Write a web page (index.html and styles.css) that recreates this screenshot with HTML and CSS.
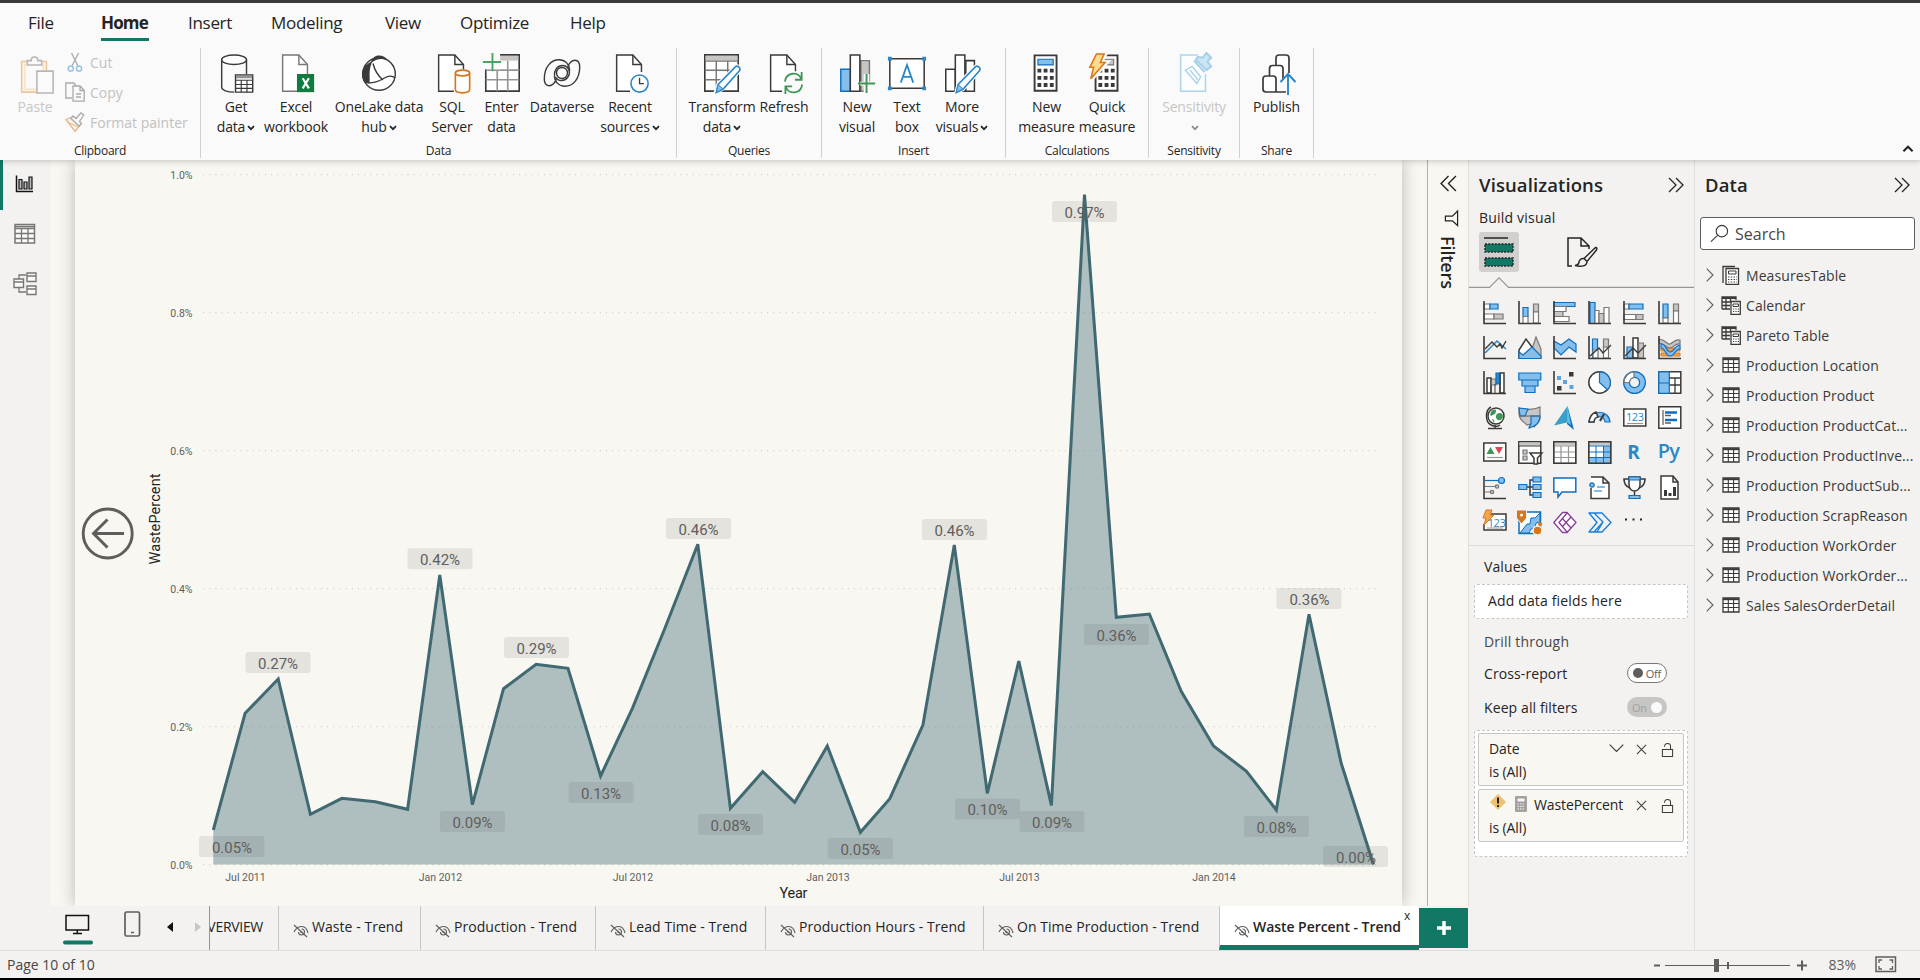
FILE: index.html
```html
<!DOCTYPE html>
<html lang="en">
<head>
<meta charset="utf-8">
<title>Waste Percent - Trend</title>
<link rel="stylesheet" href="styles.css">
</head>
<body>
<svg class="defs" width="0" height="0">
  <defs>
    <symbol id="chev" viewBox="0 0 8 6"><path d="M1 1.2 4 4.2 7 1.2" fill="none" stroke="#252423" stroke-width="1.8"/></symbol>
    <symbol id="hidden-eye" viewBox="0 0 16 14"><path d="M1 1 14 13M1 8C3 4 6 2.500 9 2.500 12 2.500 14 5 15 9M5.500 8a3 3 0 1 0 3-3" fill="none" stroke="#605e5c" stroke-width="1.1"/><circle cx="8.300" cy="8" r="1" fill="#605e5c"/></symbol>
    <symbol id="dbl-right" viewBox="0 0 16 16"><path d="M1 1 8 8 1 15M8 1 15 8 8 15" fill="none" stroke="#252423" stroke-width="1.3"/></symbol>
    <symbol id="row-chev" viewBox="0 0 8 14"><path d="M.7.7 7 7 .7 13.300" fill="none" stroke="#605e5c" stroke-width="1.1"/></symbol>
    <symbol id="t-table" viewBox="0 0 20 20"><path d="M2 3h16v14H2z" fill="#fff" stroke="#3b3a39" stroke-width="1.3"/><path d="M2 4.200h16" stroke="#3b3a39" stroke-width="2"/><path d="M2 8.500h16M2 12.500h16M7.300 4v13M12.600 4v13" stroke="#3b3a39" stroke-width="1.100"/></symbol>
    <symbol id="t-calc" viewBox="0 0 20 20"><path d="M2 18V1.500h12" fill="none" stroke="#3b3a39" stroke-width="1.300"/><path d="M5 3.500h12.500v16H5z" fill="#fff" stroke="#3b3a39" stroke-width="1.300"/><path d="M7.500 6h7.500v3H7.500z" fill="none" stroke="#3b3a39"/><path d="M7 12h9M7 14.500h9M7 17h9" stroke="#3b3a39" stroke-dasharray="1.400 1.400"/></symbol>
    <symbol id="t-tablecalc" viewBox="0 0 20 20"><path d="M1 14V2h14v3M1 3.300h14M1 7h9M1 10.500h8M1 14h8M5 3v11M9.500 3v4" fill="none" stroke="#3b3a39" stroke-width="1.300"/><path d="M10 6.500h9.300v13H10z" fill="#fff" stroke="#3b3a39" stroke-width="1.300"/><path d="M12 9h5.500v2.500H12z" fill="none" stroke="#3b3a39"/><path d="M12 14h6M12 16.500h6" stroke="#3b3a39" stroke-dasharray="1.200 1.200"/></symbol>
    <symbol id="lock" viewBox="0 0 14 16"><path d="M1.500 7.500h11v7.500h-11z" fill="none" stroke="#3b3a39" stroke-width="1.100"/><path d="M3.800 4.500C3.800 2 5 1 7 1s3.300 1.200 3.300 3.200V7.500" fill="none" stroke="#3b3a39" stroke-width="1.100"/></symbol>
    <symbol id="cross" viewBox="0 0 12 12"><path d="M1 1 11 11M11 1 1 11" stroke="#3b3a39" stroke-width="1.100"/></symbol>
  </defs>
</svg>

<header class="ribbon">
  <nav class="menu">
    <span class="m-file">File</span><span class="m-home active">Home</span><span class="m-insert">Insert</span><span class="m-model">Modeling</span><span class="m-view">View</span><span class="m-opt">Optimize</span><span class="m-help">Help</span>
  </nav>
  <div class="groups">
    <section class="group g-clip">
      <div class="tools">
        <div class="btn dim w-paste">
          <svg class="ico" viewBox="0 0 40 44"><g fill="none" stroke-width="1.600"><path d="M6 9h26v32H6z" fill="#fdf3e2" stroke="#ecc79d"/><path d="M9.500 12h19v26h-19z" fill="#fafafa" stroke="#f6e3c8"/><path d="M12 12.500V8h4c0-5 7-5 7 0h4v4.500z" fill="#fafafa" stroke="#b8b6b4"/><path d="M22 19h17v23H22z" fill="#fafafa" stroke="#b8b6b4"/></g></svg>
          <b>Paste</b>
        </div>
        <div class="small-tools">
          <div class="stool"><svg viewBox="0 0 20 20"><path d="M6.500 1 13 14M13.500 1 7 14" stroke="#aaa" stroke-width="1.300"/><circle cx="5.800" cy="16.500" r="2.600" fill="none" stroke="#95c3e0" stroke-width="1.500"/><circle cx="14" cy="16.500" r="2.600" fill="none" stroke="#95c3e0" stroke-width="1.500"/></svg>Cut</div>
          <div class="stool"><svg viewBox="0 0 20 20"><path d="M7 16H.8V1h8l2 2M8 4h7l4.200 4.200V19.200H8zM15 4v4.500h4M11 12h5M11 15h5" fill="none" stroke="#aaa" stroke-width="1.300"/></svg>Copy</div>
          <div class="stool"><svg viewBox="0 0 20 20"><path d="M1 7.500 8.500 4.500 16 12 10 19.500z" fill="#fdf3e2" stroke="#e5b58f" stroke-width="1.300"/><path d="M2 10 13 15" stroke="#e5b58f"/><path d="M8 4 11 6.500 16 .8 18.800 3 14.500 9.500 16.500 11.500 14 14 6 6.500z" fill="#fafafa" stroke="#aaa" stroke-width="1.300"/></svg>Format painter</div>
        </div>
      </div>
      <footer>Clipboard</footer>
    </section>
    <section class="group g-data">
      <div class="tools">
        <div class="btn w60">
          <svg class="ico" viewBox="0 0 40 44"><g fill="none" stroke="#3b3a39" stroke-width="1.500"><path d="M5 7v29c0 3 6 5 13 5"/><path d="M31 7v15"/><ellipse cx="18" cy="7" rx="13" ry="5" fill="#fff"/><path d="M19.500 23h18v18h-18z" fill="#fff"/><path d="M20 25h17" stroke="#979593" stroke-width="3"/><path d="M19.500 28.500h18M19.500 33h18M19.500 37h18M25.500 28v13M31.500 28v13" stroke-width="1.200"/></g></svg>
          <b>Get<br>data<svg class="chev"><use href="#chev"/></svg></b>
        </div>
        <div class="btn w60">
          <svg class="ico" viewBox="0 0 40 44"><path d="M22 40H6V2h17l9 10v12" fill="#fff" stroke="#797775" stroke-width="1.500"/><path d="M23 2v10h9" fill="none" stroke="#797775" stroke-width="1.500"/><path d="M21 22h18v19H21z" fill="#107c41"/><path d="M27 26.500 33.500 37M33.500 26.500 27 37" stroke="#fff" stroke-width="2.300"/></svg>
          <b>Excel<br>workbook</b>
        </div>
        <div class="btn w106">
          <svg class="ico" viewBox="0 0 40 42"><circle cx="20" cy="21" r="16.300" fill="#fff" stroke="#3b3a39" stroke-width="1.400"/><path d="M11.500 10.500C13 5 16 2.500 20 2.500c4 0 6.500 1.500 8.500 4.500-6-2-12-1-17 3.500z" fill="#3b3a39"/><path d="M12.500 8.500C8 11 3.500 14 3 20.500 2.700 27 6 31 9.500 30.500 12.500 29.500 8.500 20 12.500 10.500z" fill="#3b3a39"/><path d="M14 10.500c1.500 6 4.500 12 10 16.500M9.500 30c7 0 10-1.500 15-4.500 4.500-2.700 8.500-3.500 11.500-.5" fill="none" stroke="#3b3a39" stroke-width="1.400"/></svg>
          <b>OneLake data<br>hub<svg class="chev"><use href="#chev"/></svg></b>
        </div>
        <div class="btn w40">
          <svg class="ico" viewBox="0 0 40 44"><path d="M22 40H6V2h17l9 10v5" fill="#fff" stroke="#3b3a39" stroke-width="1.500"/><path d="M23 2v10h9" fill="none" stroke="#3b3a39" stroke-width="1.500"/><path d="M23.500 21v17c0 5 15 5 15 0V21" fill="#fff" stroke="#d8761a" stroke-width="1.700"/><ellipse cx="31" cy="21" rx="7.500" ry="3" fill="#fff" stroke="#d8761a" stroke-width="1.700"/></svg>
          <b>SQL<br>Server</b>
        </div>
        <div class="btn w59">
          <svg class="ico" viewBox="0 0 40 44"><path d="M3 2h35v38H3z" fill="#fff" stroke="#3b3a39" stroke-width="1.700"/><path d="M17 3h20v5H17z" fill="#c8c6c4"/><path d="M3 18h35M3 28h35M15 18v22M26 8v32" stroke="#979593" stroke-width="1.700"/><path d="M1 0h17v17H1z" fill="#fafafa"/><path d="M10 0v19M0 9.500h19" stroke="#4aa564" stroke-width="2"/></svg>
          <b>Enter<br>data</b>
        </div>
        <div class="btn w62">
          <svg class="ico" viewBox="0 0 40 42"><g fill="none" stroke="#3b3a39" stroke-width="1.400"><path d="M14.500 25C13.500 30 10 32.800 7 32.800 3.500 32.800 2.300 29.500 2.300 26 2.300 14 9 6.700 17 6.700c6 0 10.500 4.300 10.500 10.500"/><path d="M25.500 15C26.500 10 30 7.200 33 7.200c3.500 0 4.700 3.300 4.700 6.800 0 12-6.700 19.300-14.700 19.300-6 0-10.500-4.300-10.500-10.500"/><path d="M12.500 22.800C12 17 15.500 12.500 20.500 12.500c4 0 7 3 7 7.500M27.500 17.200c.5 5.800-3 10.300-8 10.300-3 0-5-1.500-6-3.500"/><circle cx="20" cy="20" r="5.500"/></g></svg>
          <b>Dataverse</b>
        </div>
        <div class="btn w74">
          <svg class="ico" viewBox="0 0 40 44"><path d="M20 40H6V2h17l9 10v8" fill="#fff" stroke="#3b3a39" stroke-width="1.500"/><path d="M23 2v10h9" fill="none" stroke="#3b3a39" stroke-width="1.500"/><circle cx="30" cy="32" r="9" fill="#fff" stroke="#2b88c8" stroke-width="1.700"/><path d="M30 26v6h4.500" fill="none" stroke="#3b3a39" stroke-width="1.400"/></svg>
          <b>Recent<br>sources<svg class="chev"><use href="#chev"/></svg></b>
        </div>
      </div>
      <footer>Data</footer>
    </section>
    <section class="group g-query">
      <div class="tools">
        <div class="btn w68">
          <svg class="ico" viewBox="0 0 40 44"><path d="M2 2h35v38H2z" fill="#fff" stroke="#3b3a39" stroke-width="1.700"/><path d="M3 3h33v5H3z" fill="#c8c6c4"/><path d="M2 8.500h35M2 18h35M2 28h25M14 9v30M26 9v20" stroke="#797775" stroke-width="1.500"/><path d="M13 42 16 33 34 14.500c2-2 6 1 4.500 4L20 38z" fill="#fff" stroke="#fff" stroke-width="4"/><path d="M14 41.500 16 33 34 14.500c2-2 6 1 4.500 4L21 38z" fill="#fff" stroke="#2b88c8" stroke-width="1.700"/><path d="M14 41.500 16 33l5 4.500z" fill="#83beec" stroke="#2b88c8"/></svg>
          <b>Transform<br>data<svg class="chev"><use href="#chev"/></svg></b>
        </div>
        <div class="btn w56">
          <svg class="ico" viewBox="0 0 40 44"><path d="M18 40H6V2h17l9 10v7" fill="#fff" stroke="#3b3a39" stroke-width="1.500"/><path d="M23 2v10h9" fill="none" stroke="#3b3a39" stroke-width="1.500"/><path d="M21 30c1-10 14-11 17-3M38.500 20v8h-7M39 33c-1 10-14 11-17 3M21.500 43v-8h7" fill="none" stroke="#3f9657" stroke-width="1.900"/></svg>
          <b>Refresh</b>
        </div>
      </div>
      <footer>Queries</footer>
    </section>
    <section class="group g-insert">
      <div class="tools">
        <div class="btn w50">
          <svg class="ico" viewBox="0 0 40 44"><path d="M24 8h9v32h-9z" fill="#c8c6c4" stroke="#797775" stroke-width="1.500"/><path d="M3 17h10v23H3z" fill="#83beec" stroke="#106ebe" stroke-width="1.500"/><path d="M13 2h10v38H13z" fill="#fff" stroke="#3b3a39" stroke-width="1.600"/><path d="M27 22h6v8h6v12H27v-8h-4v-4h4z" fill="#fafafa"/><path d="M30 22v20M21 32h18" stroke="#3f9657" stroke-width="2"/></svg>
          <b>New<br>visual</b>
        </div>
        <div class="btn w50">
          <svg class="ico" viewBox="0 0 40 44"><path d="M2 6h36v31H2z" fill="#fff" stroke="#3b3a39" stroke-width="1.600"/><path d="M0 4h4v4H0zM36 4h4v4h-4zM0 35h4v4H0zM36 35h4v4h-4z" fill="#2b88c8"/><path d="M13.500 31 20 12.500 26.500 31M15.500 25h9" fill="none" stroke="#2b88c8" stroke-width="1.900"/></svg>
          <b>Text<br>box</b>
        </div>
        <div class="btn w60">
          <svg class="ico" viewBox="0 0 40 44"><g fill="#fff" stroke="#3b3a39" stroke-width="1.600"><path d="M24 8h9v32h-9z"/><path d="M3 17h10v23H3z"/><path d="M13 2h10v38H13z"/></g><path d="M14 41.500 16 33 34 14.500c2-2 6 1 4.500 4L21 38z" fill="#fff" stroke="#fff" stroke-width="4"/><path d="M14 41.500 16 33 34 14.500c2-2 6 1 4.500 4L21 38z" fill="#fff" stroke="#2b88c8" stroke-width="1.700"/><path d="M14 41.500 16 33l5 4.500z" fill="#83beec" stroke="#2b88c8"/></svg>
          <b>More<br>visuals<svg class="chev"><use href="#chev"/></svg></b>
        </div>
      </div>
      <footer>Insert</footer>
    </section>
    <section class="group g-calc">
      <div class="tools">
        <div class="btn w61">
          <svg class="ico" viewBox="0 0 40 44"><path d="M7 2.500h23v37H7z" fill="#fff" stroke="#3b3a39" stroke-width="2"/><path d="M10.500 6.500h16v6h-16z" fill="#83beec" stroke="#106ebe" stroke-width="1.200"/><path d="M10 18.500h17M10 26h17M10 33.500h17" stroke="#3b3a39" stroke-width="4" stroke-dasharray="4 2.500"/></svg>
          <b>New<br>measure</b>
        </div>
        <div class="btn w60">
          <svg class="ico" viewBox="0 0 40 44"><path d="M8 2.500h23v37H8z" fill="#fff" stroke="#3b3a39" stroke-width="2"/><path d="M11 6.500h16v6H11z" fill="#c8c6c4" stroke="#797775" stroke-width="1.200"/><path d="M11 18.500h17M11 26h17M11 33.500h17" stroke="#3b3a39" stroke-width="4" stroke-dasharray="4 2.500"/><path d="M9 1h9l-5 9h6L3 28l3-13H1z" fill="#fedb8b" stroke="#fafafa" stroke-width="5"/><path d="M9 1h8l-4 9h5L3 27l3-12H2z" fill="#fedb8b" stroke="#d8761a" stroke-width="1.600"/></svg>
          <b>Quick<br>measure</b>
        </div>
      </div>
      <footer>Calculations</footer>
    </section>
    <section class="group g-sens">
      <div class="tools">
        <div class="btn dim w91">
          <svg class="ico" viewBox="0 0 40 44"><path d="M24 2H6v38h26V22" fill="#fbfdfe" stroke="#acd5ec" stroke-width="1.600"/><path d="M18 14 27 25 23 32 11 18z" fill="#fff" stroke="#acd5ec" stroke-width="1.600"/><path d="M16 18 24 28" stroke="#acd5ec" stroke-width="1.500"/><path d="M20 8 31 20M24 4l5 1 4-5 5 5-4 4 4 5-5 4L22 7z" fill="#cce5f3" stroke="#a4cfe6" stroke-width="2"/></svg>
          <b>Sensitivity<br><svg class="chev"><use href="#chev"/></svg></b>
        </div>
      </div>
      <footer>Sensitivity</footer>
    </section>
    <section class="group g-share">
      <div class="tools">
        <div class="btn w74">
          <svg class="ico" viewBox="0 0 40 42"><g fill="#fff" stroke="#3b3a39" stroke-width="1.700"><path d="M19 12V5q0-3 3-3h7q3 0 3 3v15M12.500 23v-7.500q0-3 3-3H23q3 0 3 3V27"/><path d="M19 39V26q0-3-3-3H9q-3 0-3 3v10q0 3 3 3h20"/></g><path d="M31 42V21M23.500 29 31 21l7.500 8" fill="none" stroke="#2b88c8" stroke-width="1.900"/></svg>
          <b>Publish</b>
        </div>
      </div>
      <footer>Share</footer>
    </section>
    <svg class="collapse" viewBox="0 0 10 7"><path d="M1 5.500 5 1.500 9 5.500" fill="none" stroke="#252423" stroke-width="1.800"/></svg>
  </div>
</header>

<main class="workspace">
  <nav class="views">
    <div class="view on"><svg width="24" height="24" viewBox="0 0 24 24"><path d="M4.500 3.500v16H21" fill="none" stroke="#111" stroke-width="1.500"/><path d="M7 7.500h3V17H7zM12 10h3v7h-3zM17 5h3v12h-3z" fill="#bbb" stroke="#111" stroke-width="1.200"/></svg></div>
    <div class="view"><svg width="24" height="24" viewBox="0 0 24 24"><path d="M3 2.500h19.500v18.500H3z" fill="#fafafa" stroke="#797775" stroke-width="1.500"/><path d="M3 4.500h19.500M3 6.500h19.500M3 11.500h19.500M3 16.500h19.500M9.500 6v15M16 6v15" stroke="#797775" stroke-width="1.300"/></svg></div>
    <div class="view"><svg width="26" height="26" viewBox="0 0 26 26"><path d="M8 8V4h7M8 17v4h7" fill="none" stroke="#797775" stroke-width="1.300"/><path d="M3 8h9.500v8.500H3zM16 2h9v8.500h-9zM16 15h9v8.500h-9zM3 11h9.500M16 5h9M16 18h9" fill="#fafafa" stroke="#797775" stroke-width="1.400"/></svg></div>
  </nav>

  <div class="center">
    <div class="canvas-row">
      <div class="canvas">
        <svg class="page" viewBox="75 160 1327 746" width="1327" height="746">
          <g class="gridlines"><path d="M203 174.700H1381M203 312.700H1381M203 450.700H1381M203 588.700H1381M203 726.700H1381M203 864.700H1381"/></g>
          <path class="area" d="M213.300 864.500V830L245.100 713.300 278.200 679 310.400 814.300 341.800 798.300 375.300 801.700 407.600 809.300 439.800 575 472.400 804.700 503.500 688.700 536.100 664.300 568 668.300 600.600 776 632.400 708.300 665 628 697.800 544.300 730.400 808.300 762.700 771.700 794.700 802.300 827.300 746 860.400 832.300 889.800 798.700 922.900 725 954.300 545 987.300 793.300 1018.800 661 1051.400 805.300 1084.500 194.700 1116.300 617.300 1149.400 614 1181.200 691.300 1213.500 746 1246.500 771.300 1276.300 810 1309 614.300 1341.200 763.300 1373.500 864.500z"/>
          <path class="line" d="M213.300 830 245.100 713.300 278.200 679 310.400 814.300 341.800 798.300 375.300 801.700 407.600 809.300 439.800 575 472.400 804.700 503.500 688.700 536.100 664.300 568 668.300 600.600 776 632.400 708.300 665 628 697.800 544.300 730.400 808.300 762.700 771.700 794.700 802.300 827.300 746 860.400 832.300 889.800 798.700 922.900 725 954.300 545 987.300 793.300 1018.800 661 1051.400 805.300 1084.500 194.700 1116.300 617.300 1149.400 614 1181.200 691.300 1213.500 746 1246.500 771.300 1276.300 810 1309 614.300 1341.200 763.300 1373.500 864.500"/>
          <g class="ylab"><text x="192.500" y="178.500">1.0%</text><text x="192.500" y="316.500">0.8%</text><text x="192.500" y="454.500">0.6%</text><text x="192.500" y="592.500">0.4%</text><text x="192.500" y="730.500">0.2%</text><text x="192.500" y="868.500">0.0%</text></g>
          <g class="xlab"><text x="245.500" y="880.500">Jul 2011</text><text x="440.500" y="880.500">Jan 2012</text><text x="633" y="880.500">Jul 2012</text><text x="828" y="880.500">Jan 2013</text><text x="1019.500" y="880.500">Jul 2013</text><text x="1214" y="880.500">Jan 2014</text></g>
          <text class="title" x="793.500" y="897.500" textLength="28">Year</text>
          <text class="title" transform="translate(160 519) rotate(-90)" textLength="91">WastePercent</text>
          <g class="pill">
            <rect x="199" y="836" width="65.500" height="21" rx="3"/><rect x="245.500" y="652" width="65" height="21" rx="3"/><rect x="407.500" y="548.300" width="65" height="21" rx="3"/><rect x="440" y="811" width="65" height="21" rx="3"/><rect x="504" y="637" width="65" height="21" rx="3"/><rect x="568.500" y="782" width="65" height="21" rx="3"/><rect x="666" y="518" width="65" height="21" rx="3"/><rect x="698" y="814" width="65" height="21" rx="3"/><rect x="827.500" y="838" width="65.500" height="21" rx="3"/><rect x="922" y="519" width="65" height="21" rx="3"/><rect x="955" y="798.500" width="65" height="21" rx="3"/><rect x="1019.500" y="811" width="65" height="21" rx="3"/><rect x="1052" y="201" width="65" height="21" rx="3"/><rect x="1084" y="624" width="65" height="21" rx="3"/><rect x="1244" y="816" width="65" height="21" rx="3"/><rect x="1276.500" y="588" width="65" height="21" rx="3"/><rect x="1323" y="846" width="65" height="21" rx="3"/>
          </g>
          <g class="vals">
            <text x="232" y="852.500">0.05%</text><text x="278" y="669">0.27%</text><text x="440" y="565">0.42%</text><text x="472.500" y="828">0.09%</text><text x="536.500" y="654">0.29%</text><text x="601" y="799">0.13%</text><text x="698.500" y="535">0.46%</text><text x="730.500" y="831">0.08%</text><text x="860.500" y="855">0.05%</text><text x="954.500" y="536">0.46%</text><text x="987.500" y="815">0.10%</text><text x="1052" y="828">0.09%</text><text x="1084.500" y="217.500">0.97%</text><text x="1116.500" y="641">0.36%</text><text x="1276.500" y="833">0.08%</text><text x="1309.500" y="605">0.36%</text><text x="1356" y="863">0.00%</text>
          </g>
          <g class="back"><circle cx="107.700" cy="533.500" r="24.500"/><path d="M124 533.500H94M107.500 519.500 93.500 533.500 107.500 547.500"/></g>
        </svg>
      </div>
      <aside class="filters">
        <svg class="f-open" viewBox="0 0 16 16"><path d="M8 1 1 8 8 15M15 1 8 8 15 15" fill="none" stroke="#252423" stroke-width="1.300"/></svg>
        <svg class="f-icon" viewBox="0 0 16 18"><path d="M14.500 1v15.500L9 11.500H1.500V6.500H9z" fill="none" stroke="#252423" stroke-width="1.300"/></svg>
        <span>Filters</span>
      </aside>
    </div>
    <div class="tabs">
      <div class="devices">
        <svg class="desk" viewBox="0 0 30 34"><path d="M3 4.500h22.500V19H3z" fill="none" stroke="#111" stroke-width="1.500"/><path d="M14.300 19v3.500M10 22.500h9" stroke="#111" stroke-width="1.500"/><rect x="0" y="29.500" width="30" height="4" rx="2" fill="#117865"/></svg>
        <svg class="phone" viewBox="0 0 17 27"><rect x="1" y="1" width="14.500" height="24" rx="1.500" fill="none" stroke="#605e5c" stroke-width="1.700"/><path d="M7 21.500h3" stroke="#605e5c" stroke-width="1.500"/></svg>
        <svg class="arr" viewBox="0 0 6 10"><path d="M6 0v10L0 5z" fill="#111"/></svg>
        <svg class="arr2" viewBox="0 0 6 10"><path d="M0 0v10l6-5z" fill="#c8c6c4"/></svg>
      </div>
      <div class="tab t0"><span>OVERVIEW</span></div>
      <div class="tab t1"><svg><use href="#hidden-eye"/></svg><span>Waste - Trend</span></div>
      <div class="tab t2"><svg><use href="#hidden-eye"/></svg><span>Production - Trend</span></div>
      <div class="tab t3"><svg><use href="#hidden-eye"/></svg><span>Lead Time - Trend</span></div>
      <div class="tab t4"><svg><use href="#hidden-eye"/></svg><span>Production Hours - Trend</span></div>
      <div class="tab t5"><svg><use href="#hidden-eye"/></svg><span>On Time Production - Trend</span></div>
      <div class="tab t6"><svg><use href="#hidden-eye"/></svg><span>Waste Percent - Trend</span><i>x</i></div>
      <div class="add"><svg width="14" height="14" viewBox="0 0 14 14"><path d="M7 0v14M0 7h14" stroke="#fff" stroke-width="3.500"/></svg></div>
    </div>
  </div>

  <aside class="viz">
    <div class="head"><h2>Visualizations</h2><svg><use href="#dbl-right"/></svg></div>
    <div class="sub">Build visual</div>
    <div class="modes">
      <div class="mode on"><svg width="40" height="40" viewBox="0 0 40 40"><path d="M5 6h24" stroke="#252423" stroke-width="1.500"/><path d="M6 12h28v8H6zM6 26h28v8H6z" fill="#117865" stroke="#252423" stroke-width="1.500" stroke-dasharray="2 1.300"/></svg></div>
      <div class="mode"><svg width="32" height="32" viewBox="0 0 32 32"><path d="M6 30H2V2h13l8 8v3M15 2v8h8" fill="none" stroke="#252423" stroke-width="1.500"/><path d="M18 22.500 29.500 11.500c2 0 1.500 1.500 1 2.500L21 25.500zM18 22.500c-3-.5-5 2-5 4-.5 2-2 3-4 3 6 1.500 12 1 12-4z" fill="#f3f2f1" stroke="#252423" stroke-width="1.400"/></svg></div>
    </div>
    <svg class="notch" viewBox="0 0 225 11" width="225" height="11"><path d="M0 10.300H20.500L30 .8 39.500 10.300H225" fill="none" stroke="#979593" stroke-width="1.200"/></svg>
    <div class="gallery">
      <svg viewBox="0 0 24 24"><g class="b"><path d="M1 3h6v5H1z" class="w"/><path d="M7 3h8v5H7z" class="bl"/><path d="M1 13h10v5H1z" class="w"/><path d="M11 13h9v5h-9z" class="gr"/></g><path class="ax" d="M1 0v22.500h22"/></svg>
      <svg viewBox="0 0 24 24"><g class="b"><path d="M5 6.500h5v9H5z" class="bl"/><path d="M5 15.500h5v7H5z" class="w"/><path d="M15.500 3h5v8h-5z" class="gr"/><path d="M15.500 11h5v11h-5z" class="w"/></g><path class="ax" d="M1 0v22.500h22"/></svg>
      <svg viewBox="0 0 24 24"><g class="b"><path d="M1 1.500h21v4H1z" class="bl"/><path d="M1 5.500h12v5H1z" class="w"/><path d="M1 10.500h9v5H1z" class="gr"/><path d="M1 15.500h15v5H1z" class="w"/></g><path class="ax" d="M1 0v22.500h22"/></svg>
      <svg viewBox="0 0 24 24"><g class="b"><path d="M2 1.500h5v21H2z" class="bl"/><path d="M7 9.500h4v13H7z" class="w"/><path d="M11 12.500h5v10h-5z" class="gr"/><path d="M16 6.500h5v16h-5z" class="w"/></g><path class="ax" d="M1 0v22.500h22"/></svg>
      <svg viewBox="0 0 24 24"><g class="b"><path d="M1 3h5v5H1z" class="w"/><path d="M6 3h14v5H6z" class="bl"/><path d="M1 13.500h12v5H1z" class="w"/><path d="M13 13.500h7v5h-7z" class="gr"/></g><path class="ax" d="M1 0v22.500h22"/></svg>
      <svg viewBox="0 0 24 24"><g class="b"><path d="M5 3h5v14H5z" class="bl"/><path d="M5 17h5v5H5z" class="w"/><path d="M15.500 3h5v7h-5z" class="gr"/><path d="M15.500 10h5v12h-5z" class="w"/></g><path class="ax" d="M1 0v22.500h22"/></svg>

      <svg viewBox="0 0 24 24"><path d="M2 17 14 5 23 13" fill="none" stroke="#2b88c8" stroke-width="1.500"/><path d="M2 13 9 6 14 11 17 8 19 12 23 5" fill="none" stroke="#3b3a39" stroke-width="1.400"/><path class="ax" d="M1 0v22.500h22"/></svg>
      <svg viewBox="0 0 24 24"><path d="M11 22 18 1l5 12v9z" class="gr"/><path d="M1 22V14L8 3l9 12v7z" class="w dk"/><path d="M1 22.500V16l4 3 9-8 9 9v2.500z" class="bl"/></svg>
      <svg viewBox="0 0 24 24"><path d="M1 5 8 9 16 3l7 5v8l-7-5-8 8-7-7z" class="bl"/><path class="ax" d="M1 0v22.500h22"/></svg>
      <svg viewBox="0 0 24 24"><path d="M4.500 3h5v19h-5z" class="bl"/><path d="M5 14h5v8H5zM15.500 11h5v11h-5z" class="w"/><path d="M15.500 3h5v8h-5z" class="gr"/><path d="M2 20 11 12 15 17 23 9" fill="none" stroke="#3b3a39" stroke-width="1.400"/><path class="ax" d="M1 0v22.500h22"/></svg>
      <svg viewBox="0 0 24 24"><path d="M4 11h6v11H4z" class="bl"/><path d="M10 2h5v20h-5z" class="w dk"/><path d="M15.500 7h5v15h-5z" class="gr"/><path d="M2 20 10 12 15 17 23 9" fill="none" stroke="#3b3a39" stroke-width="1.400"/><path class="ax" d="M1 0v22.500h22"/></svg>
      <svg viewBox="0 0 24 24"><path d="M3 12h19v3H3zM3 17h19v3H3z" fill="#f5a54a" stroke="#d8761a"/><path d="M1 3c8 1 8 6 11 5s5-5 10-4v4c-6-1-6 4-10 4S6 7 1 7z" class="gr"/><path d="M3 8c6 0 5 8 9 8s5-7 10-7v4c-5 0-5 7-10 7S8 12 3 12z" class="bl"/><path class="ax" d="M1 0v22.500h22"/></svg>

      <svg viewBox="0 0 24 24"><path d="M4 7h4v15H4zM17 2h4v20h-4z" class="w dk"/><path d="M8 8h5v6H8z" class="gr"/><path d="M13 2h4v11h-4z" class="bl solid"/><path d="M8 7v15M12 13v9M17 2v20" stroke="#3b3a39"/><path class="ax" d="M1 0v22.500h22"/></svg>
      <svg viewBox="0 0 24 24"><path d="M.8 2h22v7h-22zM4 9h16v6H4zM7 15h10v6.500H7z" class="bl"/></svg>
      <svg viewBox="0 0 24 24"><path d="M16 1h4.500v4.500H16zM4 15h4.500v4.500H4z" fill="#3b3a39"/><path d="M4 5h4v4H4zM10 9h4v4h-4zM16.500 14h4v4h-4z" fill="#5ba5de"/><path class="ax" d="M1 0v22.500h22"/></svg>
      <svg viewBox="0 0 24 24"><circle cx="11.500" cy="11.500" r="10.700" class="w dk"/><path d="M11.500 11.500V.8a10.700 10.700 0 0 1 8 18z" class="bl"/></svg>
      <svg viewBox="0 0 24 24"><circle cx="11.500" cy="11.500" r="8" fill="none" stroke="#106ebe" stroke-width="7"/><circle cx="11.500" cy="11.500" r="8" fill="none" stroke="#83beec" stroke-width="4.500"/><path d="M1 11.500A10.500 10.500 0 0 1 11 1v5.500a5 5 0 0 0-4.500 5z" class="w" /></svg>
      <svg viewBox="0 0 24 24"><path d="M.8.8h22v21.500h-22z" class="w dk"/><path d="M.8.8h10.500v21.500H.8zM.8 12h10.500" class="bl"/><path d="M11.500 7h11M17 7v15M11.500 14h5.500M17 14h6" stroke="#3b3a39" fill="none" stroke-width="1.300"/></svg>

      <svg viewBox="0 0 24 24"><circle cx="13" cy="10" r="8" class="w dk"/><path d="M8 6c2-3 5-3 5-1s-1 3-3 4-2 1-3 0zM14 8c2-2 6-1 6 2s-3 5-5 4-3-4-1-6zM9 13c2 0 3 2 2 4z" fill="#3f9657"/><path d="M8 1C2 4 2 16 8 19c3 1.500 7 1.500 9 0M12 19v3M5 22.500h14" fill="none" stroke="#3b3a39" stroke-width="1.500"/></svg>
      <svg viewBox="0 0 24 24"><path d="M1 2c5 3 17 1 21-1v10c0 6-4 8-6 10l-3-3-4 1C6 16 1 14 1 8z" class="gr"/><path d="M1 2l9 1-3 7H2zM2 10l-1-8M13 10h9c0 6-3 8-6 10l-5 2c0-2 3-4 2-6z" class="bl"/><path d="M2 10h20" stroke="#605e5c"/></svg>
      <svg viewBox="0 0 24 24"><path d="M14.500 0 21 24 14 18z" fill="#106ebe"/><path d="M14.500 0 1 19.500 14 16.500z" fill="#3a9fc9"/><path d="M14.500 0 14 16.500 18 19z" fill="#5cc0e4"/></svg>
      <svg viewBox="0 0 24 24"><path d="M1 16C2 3 21 3 22 16h-5C16 9 7 9 6 16z" class="bl"/><path d="M1 16C2 9 5 7 8 6l2 5c-2 0-4 2-4 5z" class="w dk"/><path d="M16 8 12 15" stroke="#3b3a39" stroke-width="2.200"/></svg>
      <svg viewBox="0 0 24 24"><path d="M.8 3h22v17h-22z" class="w dk"/><text x="11.800" y="14.500" class="num">123</text><path d="M4 17.500h16" stroke="#979593" stroke-width="1.200"/></svg>
      <svg viewBox="0 0 24 24"><path d="M.8.8h22v21.500h-22z" class="w dk"/><path d="M5 4v15" stroke="#3b3a39"/><path d="M7 6.500h12M7 14h12" stroke="#106ebe" stroke-width="2.300"/><path d="M7 9.500h6M7 17h6" stroke="#605e5c" stroke-width="1.300"/></svg>

      <svg viewBox="0 0 24 24"><path d="M.8 2h22v18h-22z" class="w dk"/><path d="M3.500 13 7.500 6l4 7z" fill="#3f9657"/><path d="M12 6h8l-4 7z" fill="#e04450"/><path d="M4 16.500h16" stroke="#979593" stroke-width="1.200"/></svg>
      <svg viewBox="0 0 24 24"><path d="M.8.8h22v21.500h-22z" class="w dk"/><path d="M1.500 1.500h20.500v3H1.500z" fill="#c8c6c4"/><path d="M.8 5h22" stroke="#3b3a39"/><path d="M5 9h4v4H5zM5 15h4v4H5z" class="gr"/><path d="M12 12h12l-4.500 5v6H16v-6z" class="w dk"/></svg>
      <svg viewBox="0 0 24 24"><path d="M.8.8h22v21.500h-22z" class="w"/><path d="M1.500 1.500h20.500v3H1.500z" fill="#c8c6c4"/><path d="M.8 5h22M.8 11h22M.8 16.500h22M8 5v17M15.500 5v17" stroke="#979593" stroke-width="1.200"/><path d="M.8.8h22v21.500h-22z" fill="none" stroke="#3b3a39" stroke-width="1.500"/></svg>
      <svg viewBox="0 0 24 24"><path d="M.8.8h22v21.500h-22z" class="w"/><path d="M1.500 1.500h20.500v3H1.500z" fill="#c8c6c4"/><path d="M15 5h7.500v17H1v-6h14z" fill="#83beec"/><path d="M.8 5h22M.8 11h22M.8 16.500h22M8 5v17M15.500 5v17" stroke="#106ebe" stroke-width="1"/><path d="M.8.8h22v21.500h-22z" fill="none" stroke="#3b3a39" stroke-width="1.500"/></svg>
      <svg viewBox="0 0 24 24"><text x="10.500" y="18" class="r">R</text></svg>
      <svg viewBox="0 0 24 24"><text x="10.500" y="17" class="r py">Py</text></svg>

      <svg viewBox="0 0 24 24"><path class="ax" d="M1 0v22.500h22"/><path d="M2 4.500h14" stroke="#106ebe" stroke-width="1.200"/><circle cx="18.500" cy="4.500" r="3" class="bl"/><path d="M2 10.500h10M2 16h5" stroke="#797775"/><circle cx="14" cy="10.500" r="1.700" class="gr"/><circle cx="9" cy="16" r="1.700" class="gr"/></svg>
      <svg viewBox="0 0 24 24"><path d="M9 11h6M12 11V4h3M12 11v8h3" fill="none" stroke="#3b3a39" stroke-width="1.500"/><path d="M.8 8.500h8v5h-8zM15 1h8v5h-8zM15 8.500h8v5h-8zM15 16.500h8v5h-8z" class="bl"/></svg>
      <svg viewBox="0 0 24 24"><path d="M.8 2h22v14H9l-4 5v-5H.8z" class="w blue"/></svg>
      <svg viewBox="0 0 24 24"><path d="M3 1h12l6 6v15.500H3V12M15 1v6h6" class="w dk"/><circle cx="4" cy="9" r="2.200" class="bl"/><path d="M9 11h8M6 15h8" stroke="#5ba5de" stroke-width="1.300"/></svg>
      <svg viewBox="0 0 24 24"><path d="M6 3H1c0 6 3 8 6 9M17 3h5c0 6-3 8-6 9" fill="none" stroke="#3b3a39" stroke-width="1.600"/><path d="M6 1h11v8c0 4-3 6-5.500 6S6 13 6 9zM11.500 15v5" class="w dk"/><path d="M6 1h11v3H6zM6 19.500h11v3H6z" class="bl"/></svg>
      <svg viewBox="0 0 24 24"><path d="M3 0h12l5 6v17H3zM15 0v6h5" class="w dk"/><path d="M6 14h3v6H6zM10.500 17h3v3h-3zM15 11h3v9h-3z" fill="#3b3a39"/></svg>

      <svg viewBox="0 0 24 24"><path d="M8 3h15v16H1v-6" class="w dk"/><text x="13.500" y="15.500" class="num">123</text><path d="M4 17h16" stroke="#979593"/><path d="M3-1h6L7 4h4L1 14l2-7H0z" fill="#f5a54a" stroke="#d8761a"/></svg>
      <svg viewBox="0 0 24 24"><path d="M1 1h21.500v21.500H1z" class="w blue"/><path d="M2 22 9 13h3l1-6h4l5-5v9l-4 1-1 5-4 1-2 4z" fill="#83beec" stroke="#106ebe"/><path d="M-1.500-1h10V7L3.500 13-1.500 7z" fill="#d8761a" stroke="#f3f2f1"/><circle cx="3.500" cy="4" r="1.500" fill="#fff"/><circle cx="19.500" cy="19.500" r="4.500" fill="#d8761a" stroke="#f3f2f1" stroke-width="1.500"/><circle cx="22" cy="13" r="2" fill="#d8761a"/></svg>
      <svg viewBox="0 0 24 24"><g fill="#fff" stroke="#893f9b" stroke-width="1.300" stroke-linejoin="round"><path d="M9.500 1.500H14L23 11.500 14 21.500H9.500L.8 11.500z"/><path d="M14.500 1.500 6 11.500 9.500 15.500 18 6M18 17 9.500 7.500 6 11.500 14.500 21.500" fill="none"/></g></svg>
      <svg viewBox="0 0 24 24"><path d="M1 2h13l9 9.500-9 9.500H1l8-9.500zM6 2l9 9-9 10M15 11 9 21" fill="none" stroke="#1b7fd8" stroke-width="1.400" stroke-linejoin="round"/></svg>
      <svg viewBox="0 0 24 24"><path d="M2 8.500h2M9.500 8.500h2M17 8.500h2" stroke="#252423" stroke-width="2"/></svg>
    </div>
    <div class="fields">
      <label>Values</label>
      <div class="drop">Add data fields here</div>
      <label class="drill">Drill through</label>
      <div class="opt"><span>Cross-report</span><div class="tog off"><i></i>Off</div></div>
      <div class="opt"><span>Keep all filters</span><div class="tog">On<i></i></div></div>
      <div class="well">
        <div class="card"><div class="top"><span>Date</span><svg class="dn" viewBox="0 0 15 9"><path d="M.7.700 7.500 7.500 14.300.700" fill="none" stroke="#3b3a39" stroke-width="1.100"/></svg><svg class="x"><use href="#cross"/></svg><svg class="lk"><use href="#lock"/></svg></div><p>is (All)</p></div>
        <div class="card"><div class="top"><svg class="warn" viewBox="0 0 16 16"><path d="M8 0 16 8 8 16 0 8z" fill="#eec06f"/><path d="M8 3.500v6M8 11v2" stroke="#252423" stroke-width="2"/></svg><svg class="cal" viewBox="0 0 12 16"><path d="M.6.600h10.800v14.800H.6z" fill="#a19f9d" stroke="#a19f9d"/><path d="M2.500 2.500h7v3h-7z" fill="#f8f7f2"/><path d="M2.500 8h7M2.500 10.500h7M2.500 13h7" stroke="#f8f7f2" stroke-dasharray="1.500 1"/></svg><span class="wp">WastePercent</span><svg class="x"><use href="#cross"/></svg><svg class="lk"><use href="#lock"/></svg></div><p>is (All)</p></div>
      </div>
    </div>
  </aside>

  <aside class="data">
    <div class="head"><h2>Data</h2><svg><use href="#dbl-right"/></svg></div>
    <div class="search"><svg viewBox="0 0 20 20"><circle cx="12.500" cy="7.500" r="6" fill="none" stroke="#3b3a39" stroke-width="1.200"/><path d="M8 12 1 18.500" stroke="#3b3a39" stroke-width="1.200"/></svg>Search</div>
    <ul>
      <li><svg class="c"><use href="#row-chev"/></svg><svg class="t"><use href="#t-calc"/></svg>MeasuresTable</li>
      <li><svg class="c"><use href="#row-chev"/></svg><svg class="t"><use href="#t-tablecalc"/></svg>Calendar</li>
      <li><svg class="c"><use href="#row-chev"/></svg><svg class="t"><use href="#t-tablecalc"/></svg>Pareto Table</li>
      <li><svg class="c"><use href="#row-chev"/></svg><svg class="t"><use href="#t-table"/></svg>Production Location</li>
      <li><svg class="c"><use href="#row-chev"/></svg><svg class="t"><use href="#t-table"/></svg>Production Product</li>
      <li><svg class="c"><use href="#row-chev"/></svg><svg class="t"><use href="#t-table"/></svg>Production ProductCat...</li>
      <li><svg class="c"><use href="#row-chev"/></svg><svg class="t"><use href="#t-table"/></svg>Production ProductInve...</li>
      <li><svg class="c"><use href="#row-chev"/></svg><svg class="t"><use href="#t-table"/></svg>Production ProductSub...</li>
      <li><svg class="c"><use href="#row-chev"/></svg><svg class="t"><use href="#t-table"/></svg>Production ScrapReason</li>
      <li><svg class="c"><use href="#row-chev"/></svg><svg class="t"><use href="#t-table"/></svg>Production WorkOrder</li>
      <li><svg class="c"><use href="#row-chev"/></svg><svg class="t"><use href="#t-table"/></svg>Production WorkOrder...</li>
      <li><svg class="c"><use href="#row-chev"/></svg><svg class="t"><use href="#t-table"/></svg>Sales SalesOrderDetail</li>
    </ul>
  </aside>
</main>

<footer class="status">
  <span>Page 10 of 10</span>
  <svg class="zoom" viewBox="0 0 152 14" width="152" height="14"><path d="M0 7.500h6M143 7.500h10M148 2.500v10" stroke="#605e5c" stroke-width="2"/><path d="M11 7.500h125" stroke="#605e5c"/><path d="M60 1h5v13h-5zM73 4h2v7h-2z" fill="#605e5c"/></svg>
  <span class="pct">83%</span>
  <svg class="fit" viewBox="0 0 22 17" width="22" height="17"><path d="M1 1h19.500v14.500H1z" fill="none" stroke="#605e5c" stroke-width="1.500"/><path d="M7 4H4v3M4 10v3h3M14.500 4h3v3M17.500 10v3h-3" fill="none" stroke="#605e5c" stroke-width="1.300"/></svg>
</footer>
</body>
</html>
```
FILE: styles.css
```css
* { box-sizing: border-box; }
html { height: 980px; overflow: hidden; }
body {
  margin: 0;
  width: 1920px;
  height: 980px;
  overflow: hidden;
  display: flex;
  flex-direction: column;
  background: #f3f2f1;
  color: #252423;
  font-family: "Open Sans", "Noto Sans", sans-serif;
  font-size: 14px;
  letter-spacing: 0;
  border-bottom: 2px solid #000;
}
.defs { position: absolute; }
svg { flex: none; overflow: visible; }
h2, p, ul { margin: 0; padding: 0; }

/* ribbon */
.ribbon {
  flex: none;
  height: 160px;
  background: #fafafa;
  border-top: 3px solid #3b3a39;
  box-shadow: 0 1px 6px rgba(0, 0, 0, .22);
  position: relative;
  z-index: 2;
}
.menu {
  height: 38px;
  display: flex;
  padding-left: 28px;
  font-size: 17px;
  line-height: 39px;
  letter-spacing: -.3px;
}
.menu span { white-space: nowrap; }
.m-file { width: 73px; }
.m-home { width: 48px; margin-right: 39px; }
.m-insert { width: 83px; }
.m-model { width: 114px; }
.m-view { width: 75px; }
.m-opt { width: 110px; }
.menu .active { font-weight: 700; letter-spacing: -.85px; border-bottom: 3px solid #117865; }
.groups { height: 119px; padding-top: 7px; display: flex; }
.group {
  height: 110px;
  border-right: 1px solid #d2d0ce;
  display: flex;
  flex-direction: column;
}
.tools { display: flex; height: 96px; padding-top: 5px; }
.group footer { text-align: center; font-size: 12px; line-height: 15px; letter-spacing: -.25px; }
.g-clip { width: 201px; }
.g-data { width: 476px; }
.g-data .tools { padding-left: 5px; }
.g-query { width: 145px; }
.g-query .tools { padding-left: 11px; }
.g-insert { width: 184px; }
.g-insert .tools { padding-left: 10px; }
.g-calc { width: 143px; }
.g-calc .tools { padding-left: 10px; }
.g-sens { width: 91px; }
.g-share { width: 74px; }
.btn { display: flex; flex-direction: column; align-items: center; }
.btn b { font-weight: 400; font-size: 14px; line-height: 20px; letter-spacing: -.15px; white-space: nowrap; text-align: center; margin-top: 2px; }
.ico { width: 40px; height: 42px; }
.dim { color: #c8c6c4; }
.dim .chev { opacity: .5; }
.chev { width: 8px; height: 6px; margin-left: 2px; vertical-align: 1px; }
.w-paste { width: 70px; }
.w40 { width: 40px; } .w50 { width: 50px; } .w56 { width: 56px; } .w59 { width: 59px; } .w60 { width: 60px; }
.w61 { width: 61px; } .w62 { width: 62px; } .w68 { width: 68px; } .w74 { width: 74px; } .w91 { width: 91px; } .w106 { width: 106px; }
.small-tools { margin-left: -5px; margin-top: -6px; }
.stool { height: 30px; display: flex; align-items: center; gap: 5px; color: #c3c1bf; white-space: nowrap; }
.stool svg { width: 20px; height: 20px; }
.collapse { width: 12px; height: 8px; margin: 97px 6px 0 auto; }

/* workspace */
.workspace { height: 790px; display: flex; flex: none; }
.views { width: 50px; }
.view { height: 50px; display: flex; align-items: center; justify-content: center; border-left: 3px solid transparent; padding: 0 5px 2px 0; }
.view.on { border-color: #117865; }
.center { width: 1419px; }
.canvas-row { height: 746px; display: flex; background: #f8f7f2; overflow: hidden; }
.canvas { width: 1377px; padding-left: 25px; overflow: hidden; }
.page { display: block; background: #f8f7f2; box-shadow: 0 0 16px rgba(0, 0, 0, .25); }
.filters { width: 42px; border-left: 1px solid #b3b0ad; border-right: 1px solid #e1dfdd; display: flex; flex-direction: column; align-items: center; }
.f-open { width: 17px; height: 17px; margin-top: 15px; }
.f-icon { width: 15px; height: 17px; margin: 18px 0 0 7px; }
.filters span { writing-mode: vertical-rl; font-size: 18px; font-weight: 600; line-height: 24px; margin-top: 9px; letter-spacing: -.1px; }

/* chart */
.gridlines path { fill: none; stroke: #c8c6c0; stroke-width: 1; stroke-dasharray: 1 5.2; }
.area { fill: #406972; fill-opacity: .4; }
.line { fill: none; stroke: #406972; stroke-width: 3; }
.page text { font-family: Roboto, sans-serif; letter-spacing: 0; text-anchor: middle; }
.page .ylab text { font-size: 10.5px; text-anchor: end; fill: #605e5c; }
.xlab text { font-size: 10.5px; fill: #605e5c; }
.page .title { font-size: 14.5px; fill: #252423; }
.pill rect { fill: #605e5c; fill-opacity: .13; }
.vals text { font-size: 15px; fill: #605e5c; }
.back * { fill: none; stroke: #605e5c; stroke-width: 2.9; }

/* page tabs */
.tabs { height: 44px; display: flex; }
.devices { width: 159px; display: flex; align-items: flex-start; }
.desk { width: 30px; height: 34px; margin: 5px 0 0 13px; }
.phone { width: 17px; height: 27px; margin: 5px 0 0 31px; }
.arr { width: 6px; height: 10px; margin: 16px 0 0 26px; }
.arr2 { width: 6px; height: 10px; margin: 16px 0 0 22px; }
.tab { border-left: 1px solid #c8c6c4; display: flex; align-items: center; padding: 0 0 3px 15px; white-space: nowrap; overflow: hidden; letter-spacing: .05px; }
.tab svg { width: 16px; height: 14px; margin: 9px 3px 0 -1px; }
.tab span { flex: none; }
.t0 { width: 69px; padding-left: 0; border-color: #979593; justify-content: flex-end; padding-right: 15px; letter-spacing: -.3px; }
.t1 { width: 142px; } .t2 { width: 175px; } .t3 { width: 170px; } .t4 { width: 218px; } .t5 { width: 236px; }
.t6 { width: 200px; padding: 2px 0 0; padding-left: 15px; background: #fff; border-bottom: 5px solid #117865; font-weight: 600; }
.t6 span { letter-spacing: -.05px; }
.t6 i { font-style: normal; font-size: 12px; font-weight: 400; margin: -22px 0 0 3px; }
.add { width: 49px; height: 40px; margin-top: 2px; background: #117865; display: flex; align-items: center; justify-content: center; }

/* panes */
.viz { width: 226px; border-right: 1px solid #e1dfdd; }
.data { width: 225px; }
.head { height: 50px; display: flex; align-items: center; justify-content: space-between; padding: 0 10px 1px; }
.head h2 { font-size: 18.5px; font-weight: 600; letter-spacing: .1px; }
.head svg { width: 16px; height: 16px; }
.sub { padding-left: 10px; line-height: 16px; height: 22px; letter-spacing: .2px; font-weight: 500; }
.modes { height: 46px; display: flex; padding-left: 10px; gap: 43px; }
.mode { width: 40px; height: 40px; border-radius: 3px; display: flex; align-items: center; justify-content: center; }
.mode.on { background: #d2d0ce; }
.notch { display: block; margin-top: -1px; }
.gallery {
  height: 258px;
  display: grid;
  grid-template-columns: repeat(6, 35px);
  grid-auto-rows: 35px;
  padding: 13px 0 0 14px;
  border-bottom: 1px solid #dddbd9;
}
.gallery svg { width: 24px; height: 24px; }
.ax { fill: none; stroke: #3b3a39; stroke-width: 1.6; }
.w { fill: #fff; stroke: #797775; stroke-width: 1.2; }
.bl { fill: #83beec; stroke: #106ebe; stroke-width: 1.2; }
.gr { fill: #c8c6c4; stroke: #797775; stroke-width: 1.2; }
.dk { stroke: #3b3a39; stroke-width: 1.5; }
.blue { stroke: #106ebe; stroke-width: 1.5; }
.solid { fill: #2b88c8; }
.num { font-size: 11px; fill: #2b88c8; text-anchor: middle; letter-spacing: -.4px; }
.r { font-size: 19px; font-weight: 700; fill: #2b88c8; text-anchor: middle; }
.py { font-size: 20px; font-weight: 600; letter-spacing: -.8px; }
.fields { padding: 11px 6px 0 5px; letter-spacing: .1px; }
.fields label { display: block; padding-left: 10px; line-height: 20px; height: 27px; }
.drop { height: 35px; border: 1px dashed #c8c6c4; background: #fff; line-height: 32px; padding-left: 13px; border-radius: 3px; letter-spacing: .15px; }
.fields .drill { margin-top: 13px; height: 27px; font-weight: 500; color: #484644; letter-spacing: .2px; }
.opt { height: 34px; display: flex; align-items: center; justify-content: space-between; padding: 0 21px 6px 10px; }
.tog { width: 40px; height: 20px; border-radius: 10px; background: #c8c6c4; color: #a19f9d; font-size: 11px; display: flex; align-items: center; justify-content: space-between; padding: 0 5px; letter-spacing: -.2px; }
.tog i { width: 11px; height: 11px; border-radius: 50%; background: #fafafa; }
.tog.off { background: #fff; border: 1px solid #797775; color: #605e5c; }
.tog.off i { background: #605e5c; width: 10px; height: 10px; }
.well { height: 127px; margin-top: 3px; background: #fff; border: 1px dashed #c8c6c4; border-radius: 3px; padding: 2px 3px; }
.card { height: 53px; border: 1px solid #c8c6c4; border-radius: 2px; background: #f8f7f2; padding: 2px 9px 0 10px; margin-bottom: 3px; letter-spacing: -.1px; }
.top { display: flex; align-items: center; height: 25px; }
.top span { flex: 1; }
.card p { line-height: 21px; }
.dn { width: 15px; height: 9px; margin-right: 12px; }
.x { width: 11px; height: 11px; margin-right: 14px; margin-top: 2px; }
.lk { width: 13px; height: 16px; margin-top: 3px; }
.warn { width: 16px; height: 16px; margin: -6px 9px 0 1px; }
.cal { width: 12px; height: 16px; margin: -2px 7px 0 0; }
.search { margin: 7px 5px 10px; height: 33px; border: 1px solid #605e5c; border-radius: 3px; background: #fff; display: flex; align-items: center; font-size: 16px; color: #484644; gap: 6px; padding-left: 9px; }
.search svg { width: 19px; height: 19px; }
.data ul { list-style: none; color: #3b3a39; }
.data li { height: 30px; display: flex; align-items: center; padding-left: 11px; white-space: nowrap; letter-spacing: .08px; }
.c { width: 8px; height: 14px; margin-right: 7px; }
.t { width: 20px; height: 20px; margin-right: 5px; }

/* status bar */
.status { flex: none; height: 28px; border-top: 1px solid #e1dfdd; display: flex; align-items: center; padding: 0 23px 0 7px; color: #484644; }
.zoom { margin-left: auto; }
.pct { margin: 0 19px 0 22px; color: #605e5c; }
```
